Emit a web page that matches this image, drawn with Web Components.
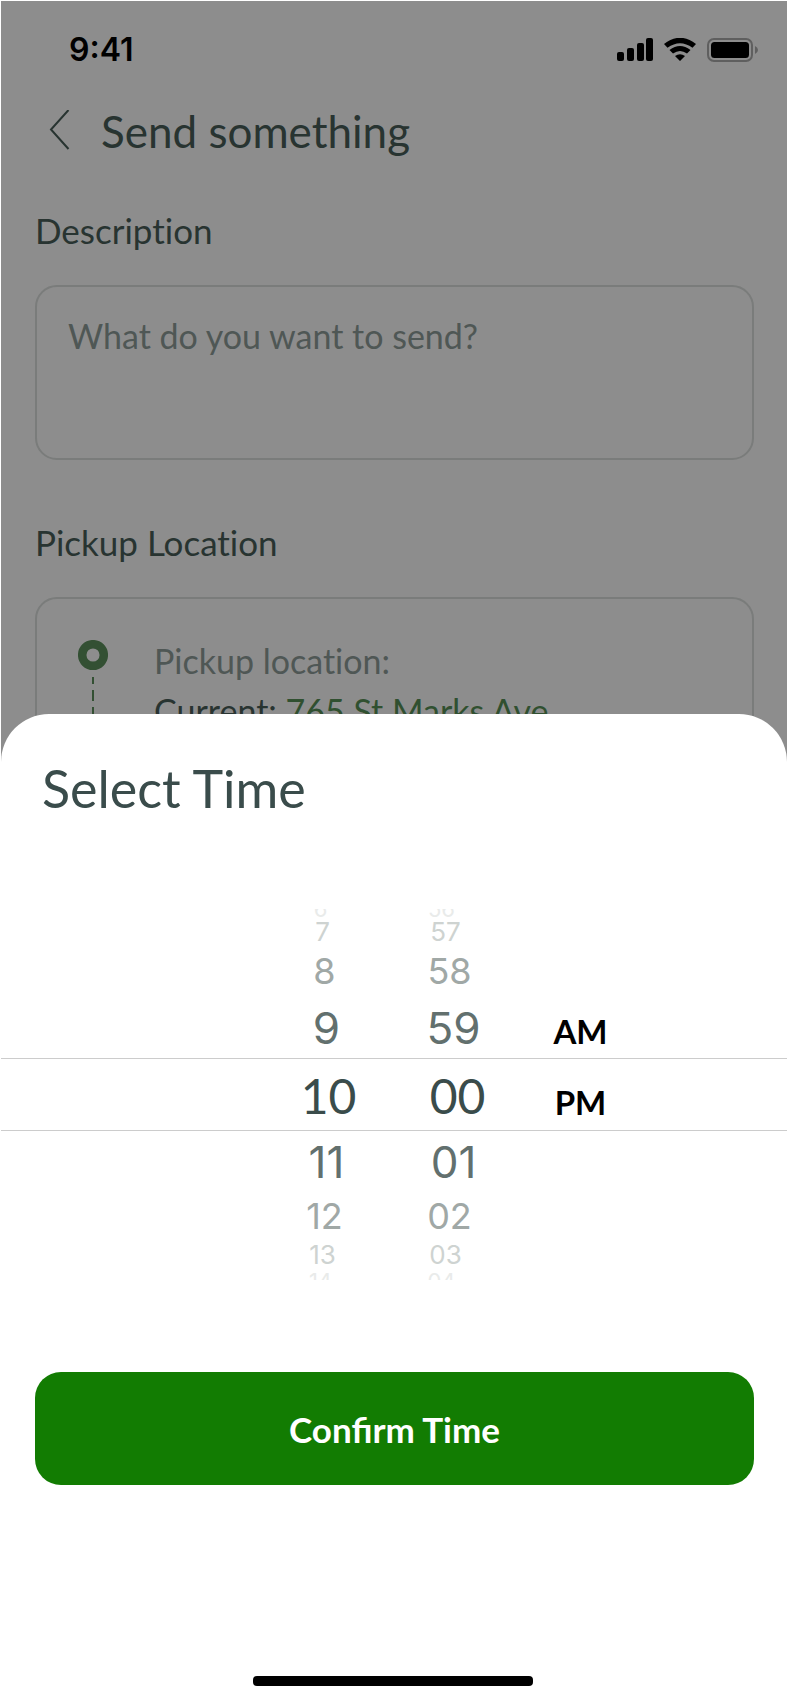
<!DOCTYPE html>
<html lang="en">
<head>
<meta charset="utf-8">
<meta name="viewport" content="width=device-width, initial-scale=1">
<title>Send something</title>
<style>
  html, body { margin: 0; background: #fff; }
  body { font-family: Lato, "Open Sans", sans-serif; font-variant-ligatures: none; color: #283431; }
</style>
</head>
<body>
<app-shell>
  <status-bar></status-bar>
  <nav-header>Send something</nav-header>
  <text-field label="Description" placeholder="What do you want to send?"></text-field>
  <location-card label="Pickup Location" caption="Pickup location:" prefix="Current:">765 St Marks Ave</location-card>
  <bottom-sheet slot="sheet" heading="Select Time">
    <time-picker></time-picker>
    <primary-button>Confirm Time</primary-button>
  </bottom-sheet>
</app-shell>

<script>
const define = (name, render) => customElements.define(name, class extends HTMLElement {
  constructor() {
    super();
    this.attachShadow({ mode: 'open' }).innerHTML = '<style>*{box-sizing:border-box}</style>' + render(this);
  }
});

define('app-shell', () => `
  <style>
    :host { display: block; position: relative; min-height: 100vh; padding: 1px 0 0 1px; box-sizing: border-box; }
    main { height: calc(100vh - 800px); min-height: 860px; overflow: hidden; background: #8d8d8d; padding: 1px 33px 0 34px; }
    .sheet { position: absolute; left: 1px; right: 0; bottom: 0; }
  </style>
  <main><slot></slot></main>
  <div class="sheet"><slot name="sheet"></slot></div>`);

define('status-bar', () => `
  <style>
    :host { display: flex; align-items: center; justify-content: space-between; height: 72px; padding: 24px 0 0 34px; box-sizing: border-box; color: #000;
      margin-right: -5px; font: 600 32px/48px Inter, sans-serif; }
    svg { display: block; }
  </style>
  <time>9:41</time>
  <svg width="142" height="24" viewBox="0 0 142 24" aria-hidden="true">
    <rect x="0" y="14" width="7" height="9" rx="2"/><rect x="10" y="10" width="7" height="13" rx="2"/>
    <rect x="20" y="5" width="7" height="18" rx="2"/><rect x="29" y="0" width="7" height="23" rx="2"/>
    <path d="M47 6Q63 -6.500 79 6L75.500 9.800Q63 .5 50.500 9.800ZM52.500 12Q63 4 73.500 12L70 15.500Q63 10.500 56 15.500ZM58 18Q63 14.500 68 18L63 23Z"/>
    <rect x="91" y="1" width="44" height="22" rx="6" fill="none" stroke="#5f5f5f" stroke-width="2"/>
    <rect x="94" y="4" width="38" height="16" rx="3.500"/>
    <path d="M138 8Q141 9.500 141 12T138 16Z" fill="#5f5f5f"/>
  </svg>`);

define('nav-header', () => `
  <style>
    :host { display: flex; align-items: center; height: 112px; padding: 0 0 0 14px; box-sizing: border-box; }
    button { border: 0; padding: 0; background: none; color: inherit; display: flex; width: 52px; }
    h1 { margin: 2px 0 0; font-size: 44px; line-height: 52px; font-weight: 400; }
  </style>
  <button type="button" aria-label="Back">
    <svg width="21" height="40" viewBox="0 0 21 40"><path d="M19.500 0L2 19.500L19.500 39" fill="none" stroke="currentColor" stroke-width="2"/></svg>
  </button>
  <h1><slot></slot></h1>`);

define('text-field', el => `
  <style>
    :host { display: block; padding-top: 22px; }
    label { display: block; font-size: 35px; line-height: 44px; margin-bottom: 33px; }
    textarea { display: block; width: 100%; height: 175px; resize: none; border: 2px solid #7a7c7b; border-radius: 22px;
      padding: 27px 31px; background: none; font: 400 34px/44px Lato, sans-serif; color: inherit; outline: 0; }
    textarea::placeholder { color: #4f5755; opacity: 1; }
  </style>
  <label for="t">${el.getAttribute('label')}</label>
  <textarea id="t" placeholder="${el.getAttribute('placeholder')}"></textarea>`);

define('location-card', el => `
  <style>
    :host { display: block; padding-top: 60px; }
    h2 { margin: 0 0 33px; font-size: 35px; line-height: 44px; font-weight: 400; }
    .card { display: flex; gap: 46px; height: 260px; border: 2px solid #7a7c7b; border-radius: 22px; padding: 37px 41px; }
    svg { display: block; flex: none; margin-top: 4px; }
    p { margin: 0; font-size: 34px; line-height: 50px; }
    .caption { color: #4f5755; }
    .place { color: #305030; }
  </style>
  <h2>${el.getAttribute('label')}</h2>
  <div class="card">
    <svg width="30" height="180" viewBox="0 0 30 180" fill="none" stroke="#335033" aria-hidden="true">
      <circle cx="15" cy="15" r="10.800" stroke-width="8.500"/>
      <path d="M15 37V44M15 50V180" stroke-width="2" stroke-dasharray="11 6"/>
    </svg>
    <div>
      <p class="caption">${el.getAttribute('caption')}</p>
      <p>${el.getAttribute('prefix')} <span class="place"><slot></slot></span></p>
    </div>
  </div>`);

define('bottom-sheet', el => `
  <style>
    :host { display: flex; flex-direction: column; background: #fff; border-radius: 48px 48px 0 0; padding-bottom: 17px; color: #3a4c4b; }
    h2 { margin: 44px 41px 91px; font-size: 52px; line-height: 60px; font-weight: 400; }
    .home { align-self: center; width: 280px; height: 10px; border-radius: 4px; background: #000; margin: 191px 2px 0 0; }
  </style>
  <h2>${el.getAttribute('heading')}</h2>
  <slot></slot>
  <div class="home"></div>`);

define('primary-button', () => `
  <style>
    :host { display: block; margin: 92px 33px 0 34px; }
    button { display: block; width: 100%; height: 113px; border: 0; border-radius: 26px; background: #127c02; color: #fff; padding: 0;
      font: 700 35px/44px Lato, sans-serif; }
  </style>
  <button type="button"><slot></slot></button>`);

const wheel = (name, values) => `<div class="wheel ${name}" role="listbox" aria-label="${name}">` +
  values.map((v, i) => `<div class="row d${Math.abs(i - 4)} ${i < 4 ? 'up' : 'down'}" role="option" aria-selected="${i === 4}">${v}</div>`).join('') + '</div>';

define('time-picker', () => `
  <style>
    :host { display: flex; justify-content: center; position: relative; height: 371px; padding-left: 121px; box-sizing: border-box; }
    .band { position: absolute; left: 0; right: 0; top: 149px; height: 73px; border: solid #ccc; border-width: 1px 0; }
    .wheel { display: flex; flex-direction: column; width: 126px; overflow: hidden; font-family: Inter, sans-serif; }
    .hours { --lean: 4px; margin-left: -2px; width: 128px; padding-right: 4px; }
    .minutes { --lean: 8px; }
    .row { display: flex; justify-content: center; align-items: center; }
    .d0 { height: 73px; padding-top: 3px; font: 400 48px/60px Lato, sans-serif; color: #3a4c4b; }
    .d1 { height: 61px; font-size: 44px; line-height: 60px; color: #62706e; padding-right: var(--lean); }
    .d2 { height: 48px; font-size: 36px; line-height: 48px; color: #a0a8a6; padding-right: calc(var(--lean) * 2); }
    .d3 { height: 30px; font-size: 26px; line-height: 30px; color: #ced3d1; padding-right: calc(var(--lean) * 3); }
    .d4 { height: 10px; font-size: 22px; line-height: 22px; color: #e9ebea; padding-right: calc(var(--lean) * 4); align-items: flex-start; }
    .up.d1 { height: 60px; }
    .up.d2 { height: 54px; }
    .up.d3 { height: 24px; line-height: 24px; }
    .up.d4 { height: 11px; align-items: flex-end; }
    .period { display: flex; flex-direction: column; width: 120px; padding-top: 86px; }
    button { height: 71px; border: 0; padding: 0; background: none; color: #000; font: 700 33px/44px Lato, sans-serif; }
  </style>
  <div class="band"></div>
  ${wheel('hours', ['6', '7', '8', '9', '10', '11', '12', '13', '14'])}
  ${wheel('minutes', ['56', '57', '58', '59', '00', '01', '02', '03', '04'])}
  <div class="period"><button type="button">AM</button><button type="button">PM</button></div>`);
</script>
</body>
</html>
